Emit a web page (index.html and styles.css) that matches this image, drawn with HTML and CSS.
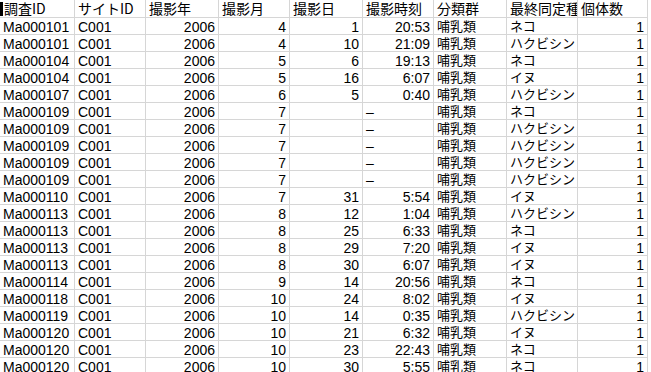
FILE: index.html
```html
<!DOCTYPE html>
<html lang="ja">
<head>
<meta charset="utf-8">
<link rel="stylesheet" href="styles.css">
</head>
<body>
<div class="sheet">
  <div class="c hd"><span class="cursor"></span>調査ID</div>
  <div class="c hd">サイトID</div>
  <div class="c hd">撮影年</div>
  <div class="c hd">撮影月</div>
  <div class="c hd">撮影日</div>
  <div class="c hd">撮影時刻</div>
  <div class="c hd">分類群</div>
  <div class="c hd">最終同定種</div>
  <div class="c hd">個体数</div>

  <div class="c l">Ma000101</div><div class="c l">C001</div><div class="c n">2006</div><div class="c n">4</div><div class="c n">1</div><div class="c n">20:53</div><div class="c j">哺乳類</div><div class="c j">ネコ</div><div class="c n">1</div>
  <div class="c l">Ma000101</div><div class="c l">C001</div><div class="c n">2006</div><div class="c n">4</div><div class="c n">10</div><div class="c n">21:09</div><div class="c j">哺乳類</div><div class="c j">ハクビシン</div><div class="c n">1</div>
  <div class="c l">Ma000104</div><div class="c l">C001</div><div class="c n">2006</div><div class="c n">5</div><div class="c n">6</div><div class="c n">19:13</div><div class="c j">哺乳類</div><div class="c j">ネコ</div><div class="c n">1</div>
  <div class="c l">Ma000104</div><div class="c l">C001</div><div class="c n">2006</div><div class="c n">5</div><div class="c n">16</div><div class="c n">6:07</div><div class="c j">哺乳類</div><div class="c j">イヌ</div><div class="c n">1</div>
  <div class="c l">Ma000107</div><div class="c l">C001</div><div class="c n">2006</div><div class="c n">6</div><div class="c n">5</div><div class="c n">0:40</div><div class="c j">哺乳類</div><div class="c j">ハクビシン</div><div class="c n">1</div>
  <div class="c l">Ma000109</div><div class="c l">C001</div><div class="c n">2006</div><div class="c n">7</div><div class="c n"></div><div class="c l">–</div><div class="c j">哺乳類</div><div class="c j">ネコ</div><div class="c n">1</div>
  <div class="c l">Ma000109</div><div class="c l">C001</div><div class="c n">2006</div><div class="c n">7</div><div class="c n"></div><div class="c l">–</div><div class="c j">哺乳類</div><div class="c j">ハクビシン</div><div class="c n">1</div>
  <div class="c l">Ma000109</div><div class="c l">C001</div><div class="c n">2006</div><div class="c n">7</div><div class="c n"></div><div class="c l">–</div><div class="c j">哺乳類</div><div class="c j">ハクビシン</div><div class="c n">1</div>
  <div class="c l">Ma000109</div><div class="c l">C001</div><div class="c n">2006</div><div class="c n">7</div><div class="c n"></div><div class="c l">–</div><div class="c j">哺乳類</div><div class="c j">ハクビシン</div><div class="c n">1</div>
  <div class="c l">Ma000109</div><div class="c l">C001</div><div class="c n">2006</div><div class="c n">7</div><div class="c n"></div><div class="c l">–</div><div class="c j">哺乳類</div><div class="c j">ハクビシン</div><div class="c n">1</div>
  <div class="c l">Ma000110</div><div class="c l">C001</div><div class="c n">2006</div><div class="c n">7</div><div class="c n">31</div><div class="c n">5:54</div><div class="c j">哺乳類</div><div class="c j">イヌ</div><div class="c n">1</div>
  <div class="c l">Ma000113</div><div class="c l">C001</div><div class="c n">2006</div><div class="c n">8</div><div class="c n">12</div><div class="c n">1:04</div><div class="c j">哺乳類</div><div class="c j">ハクビシン</div><div class="c n">1</div>
  <div class="c l">Ma000113</div><div class="c l">C001</div><div class="c n">2006</div><div class="c n">8</div><div class="c n">25</div><div class="c n">6:33</div><div class="c j">哺乳類</div><div class="c j">ネコ</div><div class="c n">1</div>
  <div class="c l">Ma000113</div><div class="c l">C001</div><div class="c n">2006</div><div class="c n">8</div><div class="c n">29</div><div class="c n">7:20</div><div class="c j">哺乳類</div><div class="c j">イヌ</div><div class="c n">1</div>
  <div class="c l">Ma000113</div><div class="c l">C001</div><div class="c n">2006</div><div class="c n">8</div><div class="c n">30</div><div class="c n">6:07</div><div class="c j">哺乳類</div><div class="c j">イヌ</div><div class="c n">1</div>
  <div class="c l">Ma000114</div><div class="c l">C001</div><div class="c n">2006</div><div class="c n">9</div><div class="c n">14</div><div class="c n">20:56</div><div class="c j">哺乳類</div><div class="c j">ネコ</div><div class="c n">1</div>
  <div class="c l">Ma000118</div><div class="c l">C001</div><div class="c n">2006</div><div class="c n">10</div><div class="c n">24</div><div class="c n">8:02</div><div class="c j">哺乳類</div><div class="c j">イヌ</div><div class="c n">1</div>
  <div class="c l">Ma000119</div><div class="c l">C001</div><div class="c n">2006</div><div class="c n">10</div><div class="c n">14</div><div class="c n">0:35</div><div class="c j">哺乳類</div><div class="c j">ハクビシン</div><div class="c n">1</div>
  <div class="c l">Ma000120</div><div class="c l">C001</div><div class="c n">2006</div><div class="c n">10</div><div class="c n">21</div><div class="c n">6:32</div><div class="c j">哺乳類</div><div class="c j">イヌ</div><div class="c n">1</div>
  <div class="c l">Ma000120</div><div class="c l">C001</div><div class="c n">2006</div><div class="c n">10</div><div class="c n">23</div><div class="c n">22:43</div><div class="c j">哺乳類</div><div class="c j">ネコ</div><div class="c n">1</div>
  <div class="c l">Ma000120</div><div class="c l">C001</div><div class="c n">2006</div><div class="c n">10</div><div class="c n">30</div><div class="c n">5:55</div><div class="c j">哺乳類</div><div class="c j">ネコ</div><div class="c n">1</div>
</div>
</body>
</html>
```
FILE: styles.css
```css
html, body {
  margin: 0;
  padding: 0;
  background: #ffffff;
}
body {
  font-family: "Liberation Sans", "Noto Sans CJK JP", sans-serif;
  color: #000000;
  overflow: hidden;
}
.sheet {
  display: grid;
  grid-template-columns: 75px 71px 73px 71px 73px 71px 73px 71px 70px;
  grid-template-rows: 18px;
  grid-auto-rows: 17px;
}
.c {
  box-sizing: border-box;
  border-right: 1px solid #d6d6d6;
  border-bottom: 1px solid #d6d6d6;
  height: 100%;
  overflow: hidden;
  white-space: nowrap;
  padding: 0 3px 0 3px;
  font-size: 14px;
  line-height: 18px;
}
.hd {
  font-family: "Noto Sans CJK JP", sans-serif;
  font-size: 14px;
  line-height: 17px;
  padding-left: 3px;
  display: flex;
  align-items: center;
}
.cursor {
  display: inline-block;
  width: 3px;
  height: 14px;
  background: #000000;
  margin-left: -3px;
  margin-right: 1px;
  flex: none;
}
.n {
  text-align: right;
}
.l {
  text-align: left;
}
.j {
  font-family: "Noto Sans CJK JP", sans-serif;
  font-size: 13px;
  line-height: 16px;
  padding-left: 3px;
}
```
